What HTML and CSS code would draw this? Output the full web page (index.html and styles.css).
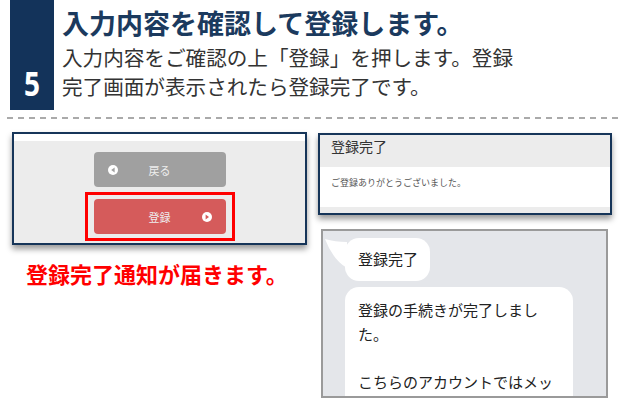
FILE: index.html
```html
<!DOCTYPE html>
<html lang="ja">
  <head>
    <meta charset="UTF-8" />
    <title>登録手順 5</title>
    <link rel="stylesheet" href="styles.css">
  </head>
  <body>
    <header class="step">
      <div class="step-num"><span>5</span></div>
      <div class="step-text">
        <h1>入力内容を確認して登録します。</h1>
        <p>入力内容をご確認の上「登録」を押します。登録<br />完了画面が表示されたら登録完了です。</p>
      </div>
    </header>

    <div class="divider"></div>

    <main class="cols">
      <div class="col">
        <div class="shot shot-form">
          <div class="shot-top"></div>
          <div class="form-area">
            <div class="btn btn-back">
              <svg class="ico ico-start" width="10" height="10" viewBox="0 0 10 10">
                <circle cx="5" cy="5" r="5" fill="#fff" />
                <path d="M6.6 2.6 L3.2 5 L6.6 7.4 Z" fill="#a0a0a0" />
              </svg>
              <span>戻る</span>
            </div>
            <div class="highlight">
              <div class="btn btn-submit">
                <span class="spacer"></span>
                <span>登録</span>
                <svg class="ico ico-end" width="10" height="10" viewBox="0 0 10 10">
                  <circle cx="5" cy="5" r="5" fill="#fff" />
                  <path d="M3.6 2.6 L7 5 L3.6 7.4 Z" fill="#d55b5b" />
                </svg>
              </div>
            </div>
          </div>
        </div>
        <p class="note">登録完了通知が届きます。</p>
      </div>

      <div class="col">
        <div class="shot shot-done">
          <div class="done-head">登録完了</div>
          <div class="done-body">ご登録ありがとうございました。</div>
          <div class="done-foot"></div>
        </div>

        <div class="chat">
          <div class="bubble bubble-first">
            <svg class="tail" width="22" height="34" viewBox="0 0 22 34">
              <path d="M0 1 Q10 4 22 4 L22 30 Q8 22 0 1 Z" fill="#fff" />
            </svg>
            登録完了
          </div>
          <div class="bubble bubble-long">
            登録の手続きが完了しまし<br />た。<br /><br />こちらのアカウントではメッ
          </div>
        </div>
      </div>
    </main>
  </body>
</html>
```

FILE: styles.css
```css
body {
  margin: 0;
  width: 625px;
  height: 403px;
  overflow: hidden;
  background: #fff;
  font-family: "Noto Sans CJK JP", "Noto Sans", sans-serif;
}

/* 見出し */
.step {
  display: flex;
  gap: 8px;
  padding-left: 10px;
  height: 110px;
}

.step-num {
  width: 44px;
  background: #13335a;
  display: flex;
  align-items: flex-end;
  justify-content: center;
  padding-bottom: 12px;
  box-sizing: border-box;
}

.step-num span {
  color: #fff;
  font-family: "Noto Sans", sans-serif;
  font-weight: 700;
  font-size: 28px;
  line-height: 30px;
  display: inline-block;
  transform: scaleY(1.2);
}

.step-text h1 {
  margin: 5px 0 0;
  font-size: 27px;
  line-height: 36px;
  font-weight: 700;
  color: #1b3a5e;
}

.step-text p {
  margin: 2px 0 0;
  font-size: 20.6px;
  line-height: 29px;
  color: #333;
}

.divider {
  margin: 7px 7px 0 7px;
  height: 2px;
  background: repeating-linear-gradient(to right, #aaa 0 6px, transparent 6px 11px);
}

/* 2列 */
.cols {
  display: grid;
  grid-template-columns: 295px 294px;
  gap: 11px;
  padding-left: 12px;
  margin-top: 13px;
}

.shot {
  border: 2px solid #163559;
  box-shadow: 0 4px 6px rgba(0, 0, 0, 0.4);
}

.shot-top {
  height: 7px;
  background: #fff;
}

.form-area {
  background: #ececec;
  padding: 11px 0 2px;
  display: flex;
  flex-direction: column;
  align-items: center;
  gap: 5px;
}

.btn {
  width: 132px;
  height: 35px;
  border-radius: 4px;
  box-sizing: border-box;
  padding: 0 14px;
  display: grid;
  grid-template-columns: 1fr auto 1fr;
  align-items: center;
  color: #eee;
  font-size: 11px;
}

.btn-back {
  background: #a0a0a0;
}

.btn-submit {
  background: #d55b5b;
}

.ico-start {
  justify-self: start;
}

.ico-end {
  justify-self: end;
}

.highlight {
  border: 3px solid #f00;
  padding: 4px 6px;
}

.note {
  margin: 14px 0 0 14px;
  font-size: 22px;
  line-height: 28px;
  font-weight: 700;
  color: #f00;
}

/* 完了画面 */
.shot-done {
  margin-top: 1px;
  background: #fff;
}

.done-head {
  background: #ececec;
  height: 32px;
  padding: 2px 11px 0;
  box-sizing: border-box;
  font-size: 14px;
  line-height: 18px;
  color: #333;
}

.done-body {
  height: 40px;
  padding: 10px 11px 0;
  box-sizing: border-box;
  font-size: 9px;
  line-height: 12px;
  color: #555;
}

.done-foot {
  height: 6px;
  background: #ececec;
}

/* チャット */
.chat {
  margin: 14px 4px 0 3px;
  height: 169px;
  border: 2px solid #9a9a9a;
  background: #e4e6ea;
  padding: 7px 0 0 22px;
  box-sizing: border-box;
  overflow: hidden;
  display: flex;
  flex-direction: column;
  align-items: flex-start;
  gap: 6px;
}

.bubble {
  position: relative;
  flex-shrink: 0;
  background: #fff;
  border-radius: 14px;
  font-size: 15px;
  line-height: 24px;
  color: #222;
  white-space: nowrap;
}

.bubble-first {
  padding: 9px 12px 10px 13px;
}

.bubble-long {
  width: 228px;
  box-sizing: border-box;
  padding: 11px 13px 20px;
}

.tail {
  position: absolute;
  left: -20px;
  top: 0;
}
```
